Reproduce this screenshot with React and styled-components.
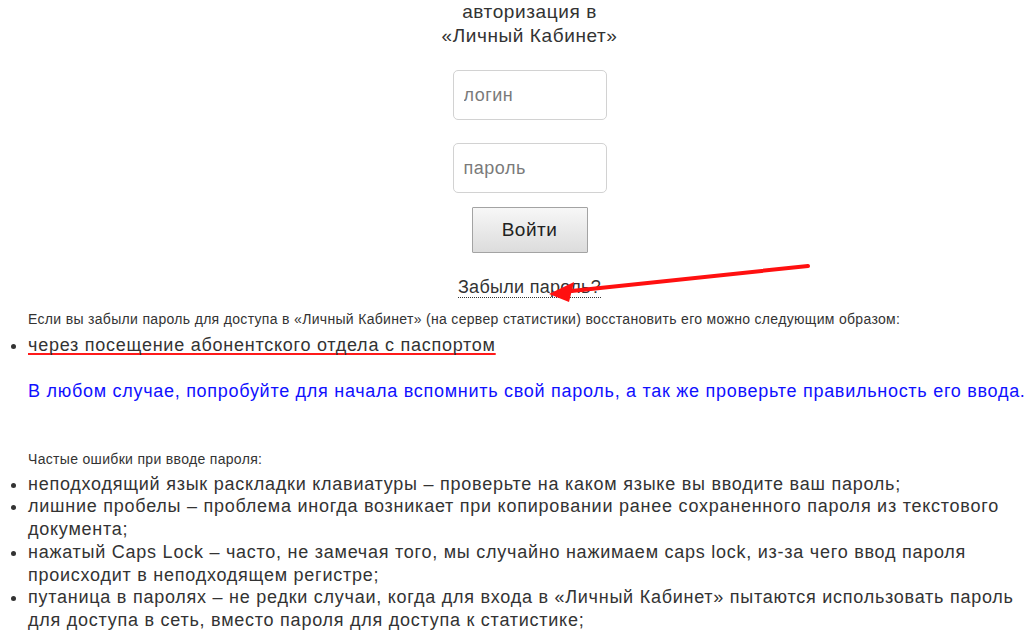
import React from "react";
import styled, { createGlobalStyle } from "styled-components";

const Global = createGlobalStyle`
  html, body { margin: 0; padding: 0; background: #fff; }
  body {
    font-family: "Liberation Sans", Arial, sans-serif;
    color: #333;
  }
  * { box-sizing: border-box; }
`;

const Page = styled.div`
  position: relative;
  width: 1031px;
  padding: 0 0 0 28px;
`;

const LoginBlock = styled.form`
  display: flex;
  flex-direction: column;
  align-items: center;
`;

const Title = styled.div`
  font-size: 19px;
  line-height: 24px;
  letter-spacing: 0.6px;
  text-align: center;
  color: #333;
`;

const Field = styled.input`
  width: 154px;
  height: 50px;
  border: 1px solid #d2d2d2;
  border-radius: 5px;
  padding: 0 10px;
  font-family: "Liberation Sans", Arial, sans-serif;
  font-size: 18px;
  letter-spacing: 0.5px;
  color: #333;
  background: #fff;
  margin-top: ${(p) => p.$mt}px;
  &::placeholder { color: #7a7a7a; }
  outline: none;
`;

const Button = styled.button`
  margin-top: 14px;
  width: 116px;
  height: 46px;
  border: 1px solid #a3a3a3;
  border-radius: 1px;
  background: linear-gradient(#f7f7f7, #dcdcdc);
  font-family: "Liberation Sans", Arial, sans-serif;
  font-size: 19px;
  letter-spacing: 0.5px;
  color: #222;
  padding: 0;
`;

const Forgot = styled.a`
  margin-top: 24px;
  font-size: 18px;
  line-height: 20px;
  color: #333;
  text-decoration: none;
  border-bottom: 1px dotted #333;
  letter-spacing: 0.3px;
`;

const Small = styled.p`
  margin: ${(p) => p.$mt}px 0 0;
  font-size: 14px;
  line-height: 18px;
  color: #333;
  letter-spacing: 0.32px;
`;

const List = styled.ul`
  margin: ${(p) => p.$mt}px 0 0 -28px;
  padding: 0 0 0 28px;
  list-style: disc;
`;

const Item = styled.li`
  font-size: 18px;
  line-height: 22.7px;
  letter-spacing: 0.75px;
  color: #333;
`;

const MarkedLink = styled.span`
  text-decoration: underline;
  text-decoration-color: #ff1a1a;
  text-decoration-thickness: 2px;
  text-underline-offset: 2px;
  text-decoration-skip-ink: none;
`;

const Notice = styled.p`
  margin: 22px 0 0;
  font-size: 18px;
  line-height: 24px;
  letter-spacing: 0.72px;
  color: #1010ff;
  white-space: nowrap;
`;

const Arrow = styled.svg`
  position: absolute;
  left: 0;
  top: 0;
  pointer-events: none;
`;

export default function App() {
  return (
    <>
      <Global />
      <Page>
        <LoginBlock onSubmit={(e) => e.preventDefault()}>
          <Title>
            авторизация в
            <br />
            «Личный Кабинет»
          </Title>
          <Field $mt={22} placeholder="логин" />
          <Field $mt={23} type="password" placeholder="пароль" />
          <Button type="submit">Войти</Button>
          <Forgot href="#">Забыли пароль?</Forgot>
        </LoginBlock>
        <Small $mt={12}>
          Если вы забыли пароль для доступа в «Личный Кабинет» (на сервер статистики) восстановить его можно следующим образом:
        </Small>
        <List $mt={6}>
          <Item>
            <MarkedLink>через посещение абонентского отдела с паспортом</MarkedLink>
          </Item>
        </List>
        <Notice>
          В любом случае, попробуйте для начала вспомнить свой пароль, а так же проверьте правильность его ввода.
        </Notice>
        <Small $mt={47}>Частые ошибки при вводе пароля:</Small>
        <List $mt={5}>
          <Item>неподходящий язык раскладки клавиатуры – проверьте на каком языке вы вводите ваш пароль;</Item>
          <Item>
            лишние пробелы – проблема иногда возникает при копировании ранее сохраненного пароля из текстового документа;
          </Item>
          <Item>
            нажатый Caps Lock – часто, не замечая того, мы случайно нажимаем caps lock, из-за чего ввод пароля происходит в неподходящем регистре;
          </Item>
          <Item>
            путаница в паролях – не редки случаи, когда для входа в «Личный Кабинет» пытаются использовать пароль для доступа в сеть, вместо пароля для доступа к статистике;
          </Item>
        </List>
        <Arrow width="1031" height="640" viewBox="0 0 1031 640">
          <line x1="808" y1="266" x2="562" y2="292" stroke="#ff1010" strokeWidth="4" strokeLinecap="round" />
          <polygon points="549,294 574,282 569,302" fill="#ff1010" />
        </Arrow>
      </Page>
    </>
  );
}
